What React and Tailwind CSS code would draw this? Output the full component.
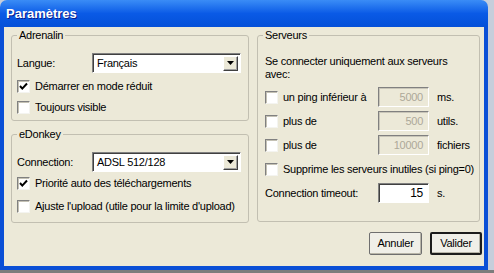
import React from 'react'

// XP "Paramètres" dialog

function Group({ label, className, children }) {
  return (
    <div className={`relative border border-[#c2bfb1] rounded-[3px] ${className}`}>
      <span className="absolute left-[5px] top-[-7px] px-[2px] leading-[13px] bg-[#ECE9D8]">{label}</span>
      {children}
    </div>
  )
}

function Check({ checked }) {
  return (
    <span className="w-[13px] h-[13px] shrink-0 bg-white border border-t-[#808080] border-l-[#808080] border-b-[#f4f4f0] border-r-[#f4f4f0] shadow-[inset_1px_1px_0_#c4c1b4] flex items-center justify-center">
      {checked && (
        <svg width="9" height="9" viewBox="0 0 9 9">
          <path d="M1 4 L3.3 6.6 L8 1.5" stroke="#000" strokeWidth="2" fill="none" />
        </svg>
      )}
    </span>
  )
}

function CheckRow({ checked, label, className }) {
  return (
    <div className={`flex items-center gap-[5px] h-[13px] ${className}`}>
      <Check checked={checked} />
      <span className="leading-[13px] whitespace-nowrap">{label}</span>
    </div>
  )
}

function Select({ value }) {
  return (
    <div className="w-[149px] h-[20px] bg-white border border-t-[#808080] border-l-[#808080] border-b-white border-r-white shadow-[inset_1px_1px_0_#404040] flex items-center pl-[4px] pr-[2px]">
      <span className="flex-1 whitespace-nowrap">{value}</span>
      <span className="w-[15px] h-[15px] bg-[#ECE9D8] border border-t-white border-l-white border-b-[#404040] border-r-[#404040] shadow-[inset_-1px_-1px_0_#a0a0a0] flex items-center justify-center">
        <svg width="7" height="4" viewBox="0 0 7 4">
          <path d="M0 0 H7 L3.5 4 Z" fill="#000" />
        </svg>
      </span>
    </div>
  )
}

function Field({ value, disabled }) {
  return (
    <div
      className={`w-[51px] h-[20px] border border-t-[#808080] border-l-[#808080] border-b-white border-r-white flex items-center justify-end pr-[5px] ${
        disabled ? 'bg-[#ECE9D8] text-[#aca899] shadow-[inset_1px_1px_0_#c8c5b8]' : 'bg-white text-black text-[12px] shadow-[inset_1px_1px_0_#404040]'
      }`}
    >
      {value}
    </div>
  )
}

function ServerRow({ label, value, unit, className }) {
  return (
    <div className={`flex items-center h-[20px] ${className}`}>
      <div className="flex items-center gap-[5px] w-[113px]">
        <Check />
        <span className="whitespace-nowrap">{label}</span>
      </div>
      <Field value={value} disabled />
      <span className="ml-[8px]">{unit}</span>
    </div>
  )
}

export default function App() {
  return (
    <div
      className="w-[494px] h-[273px] flex flex-col bg-[#c6cedb] text-[11px] tracking-[-0.25px] text-black"
      style={{ fontFamily: '"Liberation Sans", Arial, sans-serif' }}
    >
      <div className="flex flex-1">
        <div className="w-[488px] flex flex-col rounded-t-[7px] overflow-hidden">
          {/* Title bar */}
          <div className="h-[27px] shrink-0 flex items-center px-[6px] bg-gradient-to-b from-[#3a8cf6] via-[#0a5ae6] to-[#0450d8]">
            <span className="text-white font-bold text-[13px] tracking-normal [text-shadow:1px_1px_0_#0a1e8c]">Paramètres</span>
          </div>

          {/* Body */}
          <div className="flex-1 flex flex-col bg-[#ECE9D8] border-x-[4px] border-b-[4px] border-[#0a4fd6] pt-[8px] pl-[7px]">
            <div className="flex gap-[8px]">
              <div className="flex flex-col gap-[13px]">
                <Group label="Adrenalin" className="w-[238px] h-[86px] pt-[17px] pl-[5px]">
                  <div className="flex items-center">
                    <span className="w-[75px]">Langue:</span>
                    <Select value="Français" />
                  </div>
                  <CheckRow checked label="Démarrer en mode réduit" className="mt-[7px]" />
                  <CheckRow label="Toujours visible" className="mt-[8px]" />
                </Group>

                <Group label="eDonkey" className="w-[238px] h-[89px] pt-[17px] pl-[5px]">
                  <div className="flex items-center">
                    <span className="w-[75px]">Connection:</span>
                    <Select value="ADSL 512/128" />
                  </div>
                  <CheckRow checked label="Priorité auto des téléchargements" className="mt-[5px]" />
                  <CheckRow label="Ajuste l'upload (utile pour la limite d'upload)" className="mt-[10px]" />
                </Group>
              </div>

              <Group label="Serveurs" className="w-[223px] h-[187px] pt-[19px] pl-[7px]">
                <p className="leading-[13px]">
                  Se connecter uniquement aux serveurs
                  <br />
                  avec:
                </p>
                <ServerRow label="un ping inférieur à" value="5000" unit="ms." className="mt-[6px]" />
                <ServerRow label="plus de" value="500" unit="utils." className="mt-[4px]" />
                <ServerRow label="plus de" value="10000" unit="fichiers" className="mt-[4px]" />
                <div className="flex items-center gap-[5px] h-[20px] mt-[4px]">
                  <Check />
                  <span className="whitespace-nowrap">Supprime les serveurs inutiles (si ping=0)</span>
                </div>
                <div className="flex items-center h-[20px] mt-[4px]">
                  <span className="w-[113px]">Connection timeout:</span>
                  <Field value="15" />
                  <span className="ml-[8px]">s.</span>
                </div>
              </Group>
            </div>

            {/* Buttons */}
            <div className="flex justify-end gap-[8px] mt-[9px] pr-[2px]">
              <button className="w-[53px] h-[23px] bg-[#f0efe8] border border-[#6f6f6f] rounded-[2px] shadow-[inset_-1px_-1px_0_#b8b5a8]">
                Annuler
              </button>
              <button className="w-[52px] h-[23px] bg-[#f0efe8] border-2 border-[#1c1c1c] rounded-[2px] shadow-[inset_-1px_-1px_0_#b8b5a8]">
                Valider
              </button>
            </div>
          </div>
        </div>
      </div>
      <div className="h-[3px] bg-[#7c7c7c]" />
    </div>
  )
}
